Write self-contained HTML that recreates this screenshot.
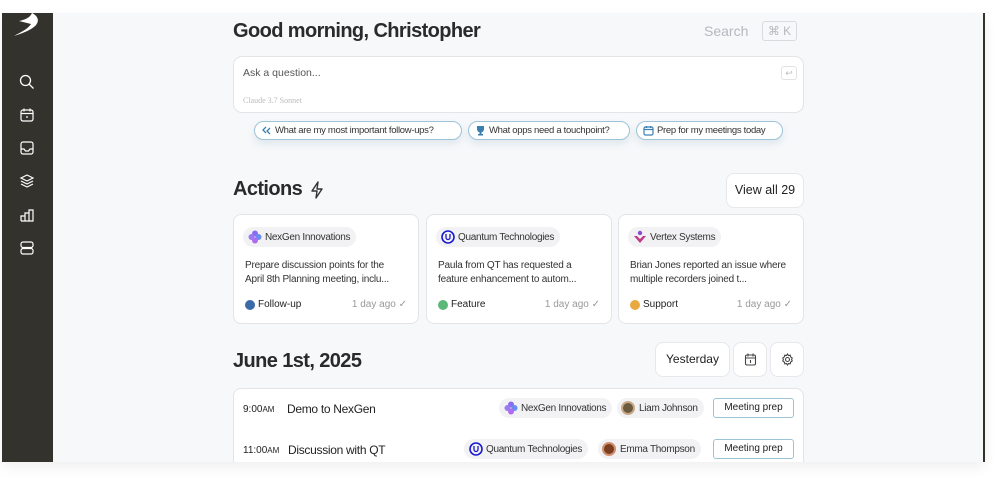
<!DOCTYPE html>
<html><head><meta charset="utf-8"><style>
*{box-sizing:border-box;margin:0;padding:0}
body{width:1000px;height:492px;background:#fff;font-family:"Liberation Sans",sans-serif;color:#222;position:relative;overflow:hidden}
.app{position:absolute;left:2px;top:13px;width:983px;height:449px;background:#f7f8fa;overflow:hidden;box-shadow:0 6px 12px rgba(0,0,0,.06)}
.side{position:absolute;left:0;top:0;width:51px;height:449px;background:#34322c}
.rbar{position:absolute;left:981px;top:0;width:2px;height:449px;background:#34322c}
.ic{position:absolute;left:17px}
.abs{position:absolute}
h1{position:absolute;left:231px;top:7px;font-size:20px;font-weight:bold;letter-spacing:-.6px;color:#2a2a2a}
.card{position:absolute;background:#fff;border:1px solid #e2e4e8;border-radius:8px}
.chip{position:absolute;height:19px;border-radius:10px;border:1px solid #9cc3d8;background:#fff;font-size:9.5px;letter-spacing:-.3px;line-height:17px;padding-left:20px;color:#333;box-shadow:0 4px 8px rgba(90,140,170,.15)}
.tag{position:absolute;height:20px;border-radius:10px;background:#f2f2f4;font-size:10px;letter-spacing:-.3px;line-height:21px;padding:0 6px 0 22px;color:#333}
.btn{position:absolute;background:#fff;border:1px solid #e6e8ec;border-radius:8px;font-size:12px;text-align:center;color:#222}
.acard .txt{position:absolute;left:11px;top:44px;font-size:10px;line-height:14px;color:#333;letter-spacing:-.2px;width:158px}
.acard .st{position:absolute;left:11px;top:84px;font-size:10px;color:#222;padding-left:13px}
.acard .st i{position:absolute;left:0;top:1px;width:10px;height:10px;border-radius:50%}
.acard .ago{position:absolute;right:11px;top:84px;font-size:10px;color:#999}
.mp{position:absolute;width:81px;height:20px;border:1px solid #9cc3d8;border-radius:3px;background:#fff;font-size:10px;text-align:center;line-height:18px;color:#222}
</style></head><body>
<div class="app">
<div class="side">
 <svg class="abs" style="left:8px;top:0" width="34" height="26" viewBox="0 0 34 26"><path d="M22 0 C30 4 30 11 21 16 C16 19 10 21 4 23 C11 19 18 16 21 11 C17 10 13 9 9 8 C14 7 20 5 22 0Z" fill="#fff"/></svg>
 <svg class="ic" style="top:61px" width="16" height="16" viewBox="0 0 16 16" fill="none" stroke="#fff" stroke-width="1.3"><circle cx="6.5" cy="6.5" r="5"/><path d="M10.3 10.3L14.5 14.5"/></svg>
 <svg class="ic" style="top:94px" width="16" height="16" viewBox="0 0 16 16" fill="none" stroke="#fff" stroke-width="1.2"><rect x="2" y="3" width="12" height="11" rx="2"/><path d="M2 6.5h12M5 1.5v3M11 1.5v3M8 9v2"/></svg>
 <svg class="ic" style="top:127px" width="16" height="16" viewBox="0 0 16 16" fill="none" stroke="#fff" stroke-width="1.2"><rect x="2" y="2" width="12" height="12" rx="2"/><path d="M2 9h3l1.5 2h3L11 9h3"/></svg>
 <svg class="ic" style="top:160px" width="16" height="16" viewBox="0 0 16 16" fill="none" stroke="#fff" stroke-width="1.2"><path d="M8 2L14 5 8 8 2 5Z M2 8l6 3 6-3 M2 11l6 3 6-3"/></svg>
 <svg class="ic" style="top:194px" width="16" height="16" viewBox="0 0 16 16" fill="none" stroke="#fff" stroke-width="1.2"><path d="M2 14V9h4v5M6 14V6h4v8M10 14V3h4v11H2"/></svg>
 <svg class="ic" style="top:227px" width="16" height="16" viewBox="0 0 16 16" fill="none" stroke="#fff" stroke-width="1.2"><rect x="2" y="2" width="12" height="5.5" rx="2"/><rect x="2" y="8.5" width="12" height="5.5" rx="2"/></svg>
</div>
<div class="rbar"></div>

<h1>Good morning, Christopher</h1>
<div class="abs" style="left:702px;top:10px;font-size:14px;color:#b5b8bd">Search</div>
<div class="abs" style="left:760px;top:8px;width:35px;height:20px;border:1px solid #d8dade;border-radius:3px;font-size:12px;color:#b5b8bd;text-align:center;line-height:18px">⌘ K</div>

<div class="card" style="left:231px;top:43px;width:571px;height:57px;border-radius:9px">
 <div class="abs" style="left:9px;top:10px;font-size:10.5px;color:#555">Ask a question...</div>
 <div class="abs" style="left:9px;top:39px;font-size:8px;color:#bbb;font-family:'Liberation Serif',serif">Claude 3.7 Sonnet</div>
 <div class="abs" style="left:547px;top:9px;width:16px;height:14px;border:1px solid #e2e2e2;border-radius:3px;font-size:9px;color:#bbb;text-align:center;line-height:12px">↩</div>
</div>
<div class="chip" style="left:252px;top:108px;width:208px">
 <svg class="abs" style="left:6px;top:3px" width="11" height="11" viewBox="0 0 11 11" fill="none" stroke="#3a7fb0" stroke-width="1.3"><path d="M5 2L2 5l3 3M9 3L6 6l3 3"/></svg>What are my most important follow-ups?</div>
<div class="chip" style="left:466px;top:108px;width:162px">
 <svg class="abs" style="left:6px;top:3px" width="11" height="11" viewBox="0 0 11 11" fill="#3a7fb0"><path d="M2 1h7v3a3.5 3.5 0 0 1-7 0Z M4.5 7h2v2h1.5v1.5h-5V9h1.5Z"/></svg>What opps need a touchpoint?</div>
<div class="chip" style="left:634px;top:108px;width:147px">
 <svg class="abs" style="left:6px;top:3px" width="11" height="11" viewBox="0 0 11 11" fill="none" stroke="#3a7fb0" stroke-width="1.2"><rect x="1" y="2" width="9" height="8" rx="1.5"/><path d="M1 4.5h9M3.5 1v2M7.5 1v2"/></svg>Prep for my meetings today</div>

<div class="abs" style="left:231px;top:165px;font-size:20px;font-weight:bold;letter-spacing:-.6px;color:#2a2a2a">Actions</div>
<svg class="abs" style="left:307px;top:168px" width="16" height="18" viewBox="0 0 16 18" fill="none" stroke="#333" stroke-width="1.4" stroke-linejoin="round"><path d="M9 1L3 10h5l-1 7 6-9H8Z"/></svg>
<div class="btn" style="left:724px;top:160px;width:78px;height:35px;line-height:33px;font-size:12.5px">View all 29</div>

<div class="card acard" style="left:231px;top:201px;width:186px;height:110px">
 <div class="tag" style="left:9px;top:12px">
  <svg class="abs" style="left:5px;top:3px" width="14" height="14" viewBox="0 0 14 14"><g><circle cx="7" cy="3.5" r="3" fill="#8a6cf0"/><circle cx="10.5" cy="7" r="3" fill="#6a8cf0"/><circle cx="7" cy="10.5" r="3" fill="#b06cf0"/><circle cx="3.5" cy="7" r="3" fill="#9a7cf0"/></g></svg>NexGen Innovations</div>
 <div class="txt">Prepare discussion points for the April 8th Planning meeting, inclu...</div>
 <div class="st"><i style="background:#3b6aa8"></i>Follow-up</div>
 <div class="ago">1 day ago ✓</div>
</div>
<div class="card acard" style="left:424px;top:201px;width:186px;height:110px">
 <div class="tag" style="left:9px;top:12px">
  <svg class="abs" style="left:5px;top:3px" width="14" height="14" viewBox="0 0 14 14"><circle cx="7" cy="7" r="6" fill="none" stroke="#1a1ad0" stroke-width="1.6"/><path d="M5 4v3.5a2 2 0 0 0 4 0V4" fill="none" stroke="#1a1ad0" stroke-width="1.3"/></svg>Quantum Technologies</div>
 <div class="txt">Paula from QT has requested a feature enhancement to autom...</div>
 <div class="st"><i style="background:#5cb87a"></i>Feature</div>
 <div class="ago">1 day ago ✓</div>
</div>
<div class="card acard" style="left:616px;top:201px;width:186px;height:110px">
 <div class="tag" style="left:9px;top:12px">
  <svg class="abs" style="left:5px;top:3px" width="14" height="14" viewBox="0 0 14 14"><circle cx="7" cy="3" r="2.2" fill="#8a4cd0"/><path d="M1 6l6 7 6-7-3 0-3 3-3-3Z" fill="#c03a8a"/></svg>Vertex Systems</div>
 <div class="txt">Brian Jones reported an issue where multiple recorders joined t...</div>
 <div class="st"><i style="background:#e8a940"></i>Support</div>
 <div class="ago">1 day ago ✓</div>
</div>

<div class="abs" style="left:231px;top:337px;font-size:20px;font-weight:bold;letter-spacing:-.6px;color:#2a2a2a">June 1st, 2025</div>
<div class="btn" style="left:653px;top:329px;width:75px;height:35px;line-height:33px">Yesterday</div>
<div class="btn" style="left:731px;top:329px;width:34px;height:35px">
 <svg style="margin-top:10px" width="13" height="13" viewBox="0 0 13 13" fill="none" stroke="#444" stroke-width="1.1"><rect x="1.5" y="2" width="10" height="10" rx="1.5"/><path d="M1.5 5h10M4 .5v3M9 .5v3M6.5 7v3"/></svg></div>
<div class="btn" style="left:768px;top:329px;width:34px;height:35px">
 <svg style="margin-top:10px" width="13" height="13" viewBox="0 0 13 13" fill="none" stroke="#444" stroke-width="1.1"><circle cx="6.5" cy="6.5" r="2"/><path d="M6.5 1l1 1.5 1.7-.4.4 1.7L11.2 5l-.6 1.5.6 1.5-1.6 1.2-.4 1.7-1.7-.4-1 1.5-1-1.5-1.7.4-.4-1.7L1.8 8l.6-1.5L1.8 5l1.6-1.2.4-1.7 1.7.4Z"/></svg></div>

<div class="card" style="left:231px;top:375px;width:571px;height:90px">
 <div class="abs" style="left:9px;top:15px;font-size:10px">9:00<span style="font-size:8px">AM</span></div>
 <div class="abs" style="left:53px;top:13px;font-size:12px;letter-spacing:-.3px">Demo to NexGen</div>
 <div class="tag" style="left:265px;top:9px">
  <svg class="abs" style="left:5px;top:3px" width="14" height="14" viewBox="0 0 14 14"><g><circle cx="7" cy="3.5" r="3" fill="#8a6cf0"/><circle cx="10.5" cy="7" r="3" fill="#6a8cf0"/><circle cx="7" cy="10.5" r="3" fill="#b06cf0"/><circle cx="3.5" cy="7" r="3" fill="#9a7cf0"/></g></svg>NexGen Innovations</div>
 <div class="tag" style="left:383px;top:9px"><i class="abs" style="left:4px;top:3px;width:14px;height:14px;border-radius:50%;background:#6b5a3e;border:2px solid #c8a888"></i>Liam Johnson</div>
 <div class="mp" style="left:479px;top:9px">Meeting prep</div>
 <div class="abs" style="left:9px;top:56px;font-size:10px">11:00<span style="font-size:8px">AM</span></div>
 <div class="abs" style="left:54px;top:54px;font-size:12px;letter-spacing:-.3px">Discussion with QT</div>
 <div class="tag" style="left:230px;top:50px">
  <svg class="abs" style="left:5px;top:3px" width="14" height="14" viewBox="0 0 14 14"><circle cx="7" cy="7" r="6" fill="none" stroke="#1a1ad0" stroke-width="1.6"/><path d="M5 4v3.5a2 2 0 0 0 4 0V4" fill="none" stroke="#1a1ad0" stroke-width="1.3"/></svg>Quantum Technologies</div>
 <div class="tag" style="left:364px;top:50px"><i class="abs" style="left:4px;top:3px;width:14px;height:14px;border-radius:50%;background:#7a3e20;border:2px solid #d09070"></i>Emma Thompson</div>
 <div class="mp" style="left:479px;top:50px">Meeting prep</div>
</div>
</div>
</body></html>
